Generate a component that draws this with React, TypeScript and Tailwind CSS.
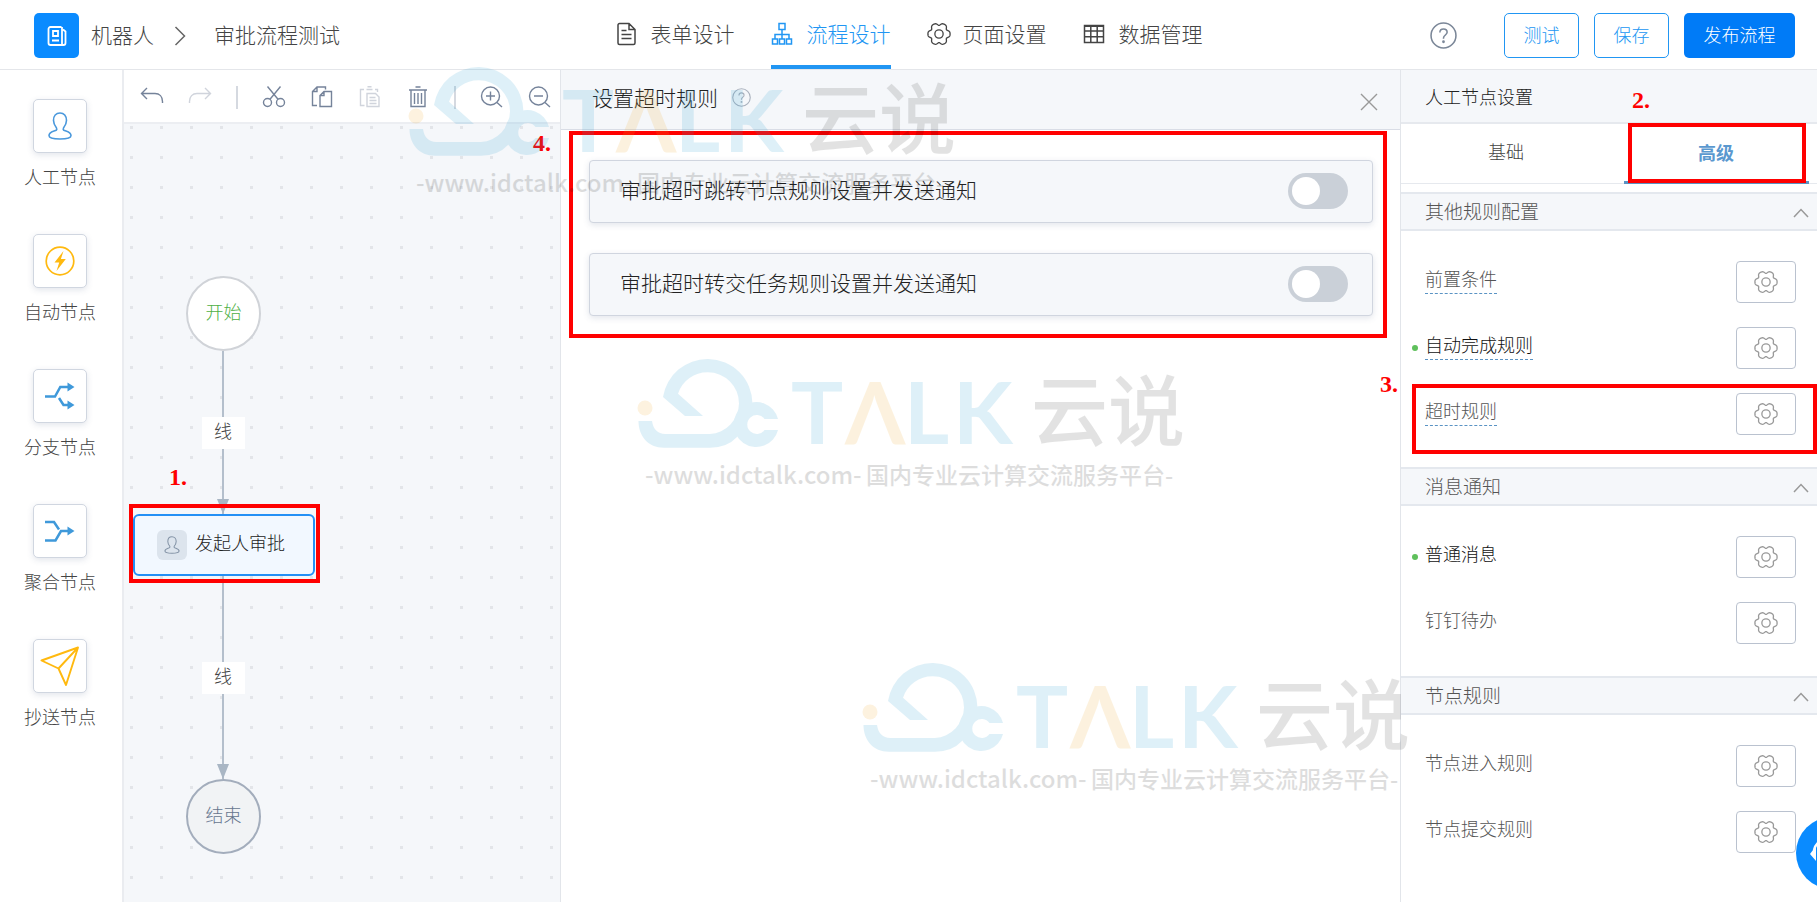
import React from "react";

const GEAR_POINTS = Array.from({ length: 96 }, (_, i) => {
  const a = (i / 96) * Math.PI * 2;
  const r = 9.3 + 1.15 * Math.cos(6 * a) - 0.3 * Math.cos(12 * a);
  return `${(11 + r * Math.cos(a)).toFixed(2)},${(11 + r * Math.sin(a)).toFixed(2)}`;
}).join(" ");

function Gear({ className }: { className?: string }) {
  return (
    <svg viewBox="0 0 22 22" className={className} fill="none" stroke="currentColor" aria-hidden="true">
      <polygon points={GEAR_POINTS} strokeWidth="1.2" strokeLinejoin="round" />
      <circle cx="11" cy="11" r="3.800" strokeWidth="1.2" />
    </svg>
  );
}

function Person({ className }: { className?: string }) {
  return (
    <svg viewBox="0 0 24 28" className={className} fill="none" stroke="currentColor" strokeWidth="1.6" aria-hidden="true">
      <path d="M12 1C8 1 5.5 4 5.5 8.5c0 3.5 1.5 5.500 3 7.500 1 2-.5 2.500-2.500 3-3 1-5 2-5 4.500C1 26 6 27 12 27s11-1 11-3.500c0-2.500-2-3.500-5-4.500-2-.5-3.500-1-2.500-3 1.500-2 3-4 3-7.500C18.500 4 16 1 12 1z" />
    </svg>
  );
}

function QuestionCircle({ className }: { className?: string }) {
  return (
    <svg viewBox="0 0 26 26" className={className} fill="none" stroke="currentColor" strokeWidth="1.5" aria-hidden="true">
      <circle cx="13" cy="13" r="12" />
      <path d="M9.500 10.200c0-2.200 1.500-3.500 3.500-3.500s3.500 1.300 3.500 3.200c0 2.400-3.500 2.900-3.500 5.600v.7" />
      <circle cx="13" cy="19" r="0.600" fill="currentColor" />
    </svg>
  );
}

const NAV = [
  {
    label: "表单设计",
    active: false,
    icon: (
      <svg viewBox="0 0 22 24" className="h-6 w-[22px]" fill="none" stroke="currentColor" strokeWidth="1.5">
        <path d="M14 1.500H4.500a1.500 1.500 0 0 0-1.500 1.500v18a1.500 1.500 0 0 0 1.500 1.500h14a1.500 1.500 0 0 0 1.500-1.500V7.500zM14 1.500v6h6M6.500 8.500h5M6.500 12.500h10M6.500 16.500h10" />
      </svg>
    ),
  },
  {
    label: "流程设计",
    active: true,
    icon: (
      <svg viewBox="0 0 22 24" className="h-6 w-[22px]" fill="none" stroke="currentColor" strokeWidth="1.500">
        <path d="M8 1.500h6v6H8zM1.500 17h5v5h-5zM8.500 17h5v5h-5zM15.500 17h5v5h-5zM11 7.500V17M4 17v-4.500h14V17" />
      </svg>
    ),
  },
  { label: "页面设置", active: false, icon: <Gear className="size-6" /> },
  {
    label: "数据管理",
    active: false,
    icon: (
      <svg viewBox="0 0 22 24" className="h-6 w-[22px]" fill="none" stroke="currentColor" strokeWidth="1.500">
        <path d="M1.500 3.500h19v17h-19zM1.500 9h19M1.500 14.700h19M7.800 3.500v17M14.200 3.500v17" />
        <path d="M1.500 4h19" strokeWidth="2" />
      </svg>
    ),
  },
];

const PALETTE = [
  { label: "人工节点", icon: <Person className="h-[28px] w-6 text-[#4a98dc]" /> },
  {
    label: "自动节点",
    icon: (
      <svg viewBox="0 0 30 30" className="size-[30px]" aria-hidden="true">
        <circle cx="15" cy="15" r="13.800" fill="none" stroke="#ffb90f" strokeWidth="1.700" />
        <path d="M18.500 5L9.500 16.500h4.700L11.500 25l9.300-12h-4.900z" fill="#ffb90f" />
      </svg>
    ),
  },
  {
    label: "分支节点",
    icon: (
      <svg viewBox="0 0 30 28" className="h-7 w-[30px]" fill="none" stroke="#3f99da" strokeWidth="2.500" aria-hidden="true">
        <path d="M0 14.500h10L15.300 5H24M14 16l4.500 7H24" />
        <path d="M22.500.5l7 4.500-7 4.500zM22.500 18.500l7 4.500-7 4.500z" fill="#3f99da" stroke="none" />
      </svg>
    ),
  },
  {
    label: "聚合节点",
    icon: (
      <svg viewBox="0 0 30 28" className="h-7 w-[30px]" fill="none" stroke="#3f99da" strokeWidth="2.500" aria-hidden="true">
        <path d="M0 5h9l5 7.500M0 23.500h10.500L16 14h8" />
        <path d="M22.500 9.500l7 4.500-7 4.500z" fill="#3f99da" stroke="none" />
      </svg>
    ),
  },
  {
    label: "抄送节点",
    icon: (
      <svg viewBox="0 0 40 40" className="size-10" fill="none" stroke="#ffb90f" strokeWidth="1.900" strokeLinejoin="round" aria-hidden="true">
        <path d="M1.500 14.500L38 1.500 26 39l-7.500-16.500zM18.500 22.500L38 1.500" />
      </svg>
    ),
  },
];

const TOOLS: { label: string; muted?: boolean; icon: React.ReactNode }[][] = [
  [
    {
      label: "撤销",
      icon: <path d="M7 3L1.500 8.500 7 14M1.500 8.500H15c4.500 0 7.500 3 7.500 8V18" />,
    },
    {
      label: "重做",
      muted: true,
      icon: <path d="M17 3l5.500 5.500L17 14M22.500 8.500H9c-4.500 0-7.500 3-7.500 8V18" />,
    },
  ],
  [
    {
      label: "剪切",
      icon: (
        <>
          <circle cx="5.500" cy="17.500" r="4" />
          <circle cx="18.500" cy="17.500" r="4" />
          <path d="M5.500 1.500L16 14.300M18.500 1.500L8 14.300" />
        </>
      ),
    },
    {
      label: "复制",
      icon: (
        <path d="M15.500 4.500v-2.500H7L2.500 6.500v14H7M7 2v4.500H2.500M14 6.500h7.500v15h-11.500V10.500zM14 6.500v4h-4" />
      ),
    },
    {
      label: "粘贴",
      muted: true,
      icon: <path d="M6 4.500H2.500v16h4M17 4.500h2.500V7M8.500 4.500h6M9.500 1.800h4M9 8.500h8.500l3.500 3.500v9.500H9zM11.500 12.500h6M11.500 15.500h7M11.500 18.500h7" />,
    },
    {
      label: "删除",
      icon: <path d="M3 5h18M9.500 2h5M5 5v16.500h14V5M8.500 8v11M12 8v11M15.500 8v11" />,
    },
  ],
  [
    {
      label: "放大",
      icon: (
        <>
          <circle cx="10.500" cy="11" r="9" />
          <path d="M17 17.500l5 4.500M6 11h9M10.500 6.500v9" />
        </>
      ),
    },
    {
      label: "缩小",
      icon: (
        <>
          <circle cx="10.500" cy="11" r="9" />
          <path d="M17 17.500l5 4.500M6 11h9" />
        </>
      ),
    },
  ],
];

const SWITCHES = [
  { id: "jump", label: "审批超时跳转节点规则设置并发送通知" },
  { id: "transfer", label: "审批超时转交任务规则设置并发送通知" },
];

type Rule = { label: string; on?: boolean; hint?: boolean };
const SECTIONS: { title: string; rules: Rule[] }[] = [
  {
    title: "其他规则配置",
    rules: [
      { label: "前置条件", hint: true },
      { label: "自动完成规则", on: true, hint: true },
      { label: "超时规则", hint: true },
    ],
  },
  { title: "消息通知", rules: [{ label: "普通消息", on: true }, { label: "钉钉待办" }] },
  { title: "节点规则", rules: [{ label: "节点进入规则" }, { label: "节点提交规则" }] },
];

const mark = "absolute z-20 font-['Liberation_Serif',serif] text-[24px] leading-6 font-bold text-[#f00]";
const frame = "pointer-events-none absolute z-20 border-4 border-[#f00]";

function Watermark({ className }: { className: string }) {
  return (
    <svg viewBox="0 0 580 160" className={`pointer-events-none absolute z-30 h-[160px] w-[580px] ${className}`} aria-hidden="true">
      <g opacity="0.15" fill="#299fd2">
        <path d="M43 57A45 45 0 0 1 88 19A45 45 0 0 1 132.500 64L117 97Q107 107.700 90 107.700H44C28 107.700 18.500 96 18.500 81H32C33 89 38 94 45 94H90A31 31 0 0 0 119 63.500A31 31 0 0 0 88 32.300A31 31 0 0 0 58 53.700L83 76H65Z" />
        <path d="M158 79A22.500 22.500 0 1 0 158 90H144.500A9.500 9.500 0 1 1 144.500 79Z" />
        <text y="104" className="font-['Lato',sans-serif] text-[87px] font-bold">
          <tspan x="171">T</tspan>
          <tspan x="284">L</tspan>
          <tspan x="333">K</tspan>
        </text>
      </g>
      <g opacity="0.14" fill="#f0a51e">
        <circle cx="25" cy="68" r="7.500" />
        <text x="225" y="104" className="font-['Lato',sans-serif] text-[87px] font-bold">Λ</text>
      </g>
      <text x="411" y="100" opacity="0.11" className="font-['Noto_Sans_CJK_SC',sans-serif] text-[77px] font-medium">云说</text>
      <g opacity="0.13" className="font-['Noto_Sans_CJK_SC',sans-serif] font-medium">
        <text x="25" y="144" className="text-[24px]">-www.idctalk.com-</text>
        <text x="246" y="144" className="text-[23px]">国内专业云计算交流服务平台-</text>
      </g>
    </svg>
  );
}

function Edge({ className, height }: { className: string; height: number }) {
  return (
    <div className={`absolute left-[69px] flex w-[60px] flex-col items-center ${className}`} style={{ height }}>
      <div className="w-[2px] flex-1 bg-[#b4bfcc]" />
      <div className="flex h-8 w-[43px] items-center justify-center bg-white pb-1 text-[18px] text-[#444]">线</div>
      <div className="w-[2px] flex-1 bg-[#b4bfcc]" />
      <svg viewBox="0 0 12 15" className="absolute bottom-0 h-[15px] w-3" aria-hidden="true">
        <path d="M0 0h12L6 15z" fill="#a9b6c4" />
      </svg>
    </div>
  );
}

export default function App() {
  return (
    <div className="relative flex h-screen min-w-[1500px] flex-col overflow-hidden bg-white font-['Noto_Sans_CJK_SC',sans-serif] text-[18px] font-light text-[#444]">
      <header className="grid h-[70px] shrink-0 grid-cols-[1fr_auto_1fr] border-b border-[#e4e6ea]">
        <div className="flex items-center pt-[2px] pl-[34px] text-[21px]">
          <span className="flex size-[45px] items-center justify-center rounded-[5px] bg-[#0a8bff]">
            <svg viewBox="0 0 20 20" className="size-5" fill="none" stroke="#fff" strokeWidth="1.800" aria-hidden="true">
              <path d="M14.500 1H3.500A2 2 0 0 0 1.500 3v14a2 2 0 0 0 2 2h13a2 2 0 0 0 2-2V5.500L16 3.500M15 1v18" />
              <path d="M6 5h5v5H6zM5 14.500h7" />
            </svg>
          </span>
          <a href="#app" className="ml-3 pb-[2px]">机器人</a>
          <svg viewBox="0 0 12 20" className="mx-5 h-5 w-3" fill="none" stroke="#666" strokeWidth="1.500" aria-hidden="true">
            <path d="M1.500 1l9 9-9 9" />
          </svg>
          <span className="ml-2 pb-[2px]">审批流程测试</span>
        </div>
        <nav className="flex gap-9 text-[21px]">
          {NAV.map((n) => (
            <a
              key={n.label}
              href="#tab"
              className={`flex w-[120px] items-center justify-between border-b-4 pt-[2px] whitespace-nowrap ${n.active ? "border-[#2196f3] text-[#2196f3]" : "border-transparent"}`}
            >
              {n.icon}
              {n.label}
            </a>
          ))}
        </nav>
        <div className="flex items-center justify-end gap-[15px] pt-[2px] pr-[22px]">
          <button type="button" aria-label="帮助" className="mr-8 text-[#7b8798]">
            <QuestionCircle className="size-[27px]" />
          </button>
          <button type="button" className="h-[45px] w-[75px] rounded-[5px] border border-[#2196f3] pb-[2px] text-[#2196f3]">测试</button>
          <button type="button" className="h-[45px] w-[75px] rounded-[5px] border border-[#2196f3] pb-[2px] text-[#2196f3]">保存</button>
          <button type="button" className="h-[45px] w-[111px] rounded-[5px] bg-[#007bf7] pb-[2px] text-white">发布流程</button>
        </div>
      </header>

      <div className="flex min-h-0 flex-1">
        <aside className="flex w-[124px] shrink-0 flex-col items-center gap-[42px] border-r-2 border-[#eaecf0] pt-[29px] pr-[2px]">
          {PALETTE.map((p) => (
            <button key={p.label} type="button" className="flex h-[93px] flex-col items-center justify-between">
              <span className="flex size-[54px] items-center justify-center rounded-[5px] border border-[#d0d6e0] bg-white shadow-[0_2px_6px_rgba(60,80,120,0.15)]">
                {p.icon}
              </span>
              <span className="leading-8">{p.label}</span>
            </button>
          ))}
        </aside>

        <main className="relative flex w-[436px] shrink-0 flex-col">
          <div className="flex h-[54px] items-center gap-6 border-b-2 border-[#eceef2] pt-[2px] pl-4 text-[#75839a]">
            {TOOLS.map((group, i) => (
              <React.Fragment key={i}>
                {i > 0 && <span className="h-[23px] w-[2px] shrink-0 bg-[#d5d9e0]" />}
                {group.map((t) => (
                  <button key={t.label} type="button" aria-label={t.label} className={t.muted ? "text-[#d0d4dc]" : ""}>
                    <svg viewBox="0 0 24 24" className="size-6" fill="none" stroke="currentColor" strokeWidth="1.400" aria-hidden="true">
                      {t.icon}
                    </svg>
                  </button>
                ))}
              </React.Fragment>
            ))}
          </div>
          <div className="relative flex-1 overflow-hidden bg-[#f5f7fa]">
            <svg className="absolute inset-0 size-full" aria-hidden="true">
              <defs>
                <pattern id="dots" width="30" height="30" patternUnits="userSpaceOnUse" x="-8" y="-12">
                  <rect x="14" y="14" width="3" height="3" fill="#e3e5e9" />
                </pattern>
              </defs>
              <rect width="100%" height="100%" fill="url(#dots)" />
            </svg>
            <Edge className="top-[227px]" height={163} />
            <Edge className="top-[452px]" height={203} />
            <div className="absolute top-[152px] left-[62px] flex size-[75px] items-center justify-center rounded-full border-2 border-[#d0d3d8] bg-white pb-1 text-[#4fb045]">
              开始
            </div>
            <div className="absolute top-[655px] left-[62px] flex size-[75px] items-center justify-center rounded-full border-2 border-[#a3adbc] bg-[#f1f3f5] pb-1 text-[#66768f]">
              结束
            </div>
            <div className="absolute top-[390px] left-[9px] flex h-[62px] w-[182px] items-center rounded-[6px] border-2 border-[#2490f5] bg-[#f2f8ff] pl-[22px] text-[#222]">
              <span className="mr-2 flex size-[30px] items-center justify-center rounded-[6px] bg-[#dce4ed]">
                <Person className="h-[18px] w-4 text-[#8292a5]" />
              </span>
              <span className="pb-[6px]">发起人审批</span>
            </div>
            <span className={`${mark} top-[341px] left-[45px]`}>1.</span>
            <div className={`${frame} top-[380px] left-[5px] h-[79px] w-[191px]`} />
          </div>
        </main>

        <section className="relative flex min-w-0 flex-1 flex-col border-x border-[#e2e5ea] bg-white">
          <div className="flex h-[60px] items-center border-b border-[#d9dde6] bg-[#f5f7fa] pr-[22px] pl-[31px]">
            <h2 className="pb-1 text-[21px] text-[#222]">设置超时规则</h2>
            <button type="button" aria-label="说明" className="ml-[14px] pb-1 text-[#a9b1bd]">
              <QuestionCircle className="size-[19px]" />
            </button>
            <button type="button" aria-label="关闭" className="ml-auto pt-1 text-[#999]">
              <svg viewBox="0 0 18 18" className="size-[18px]" fill="none" stroke="currentColor" strokeWidth="1.400">
                <path d="M1 1l16 16M17 1L1 17" />
              </svg>
            </button>
          </div>
          <div className="flex flex-col gap-[30px] py-[30px] pr-[27px] pl-7">
            {SWITCHES.map((s) => (
              <div
                key={s.id}
                className="flex h-[63px] items-center justify-between rounded-[4px] border border-[#d0d5df] bg-[#f5f7fa] pr-6 pb-px pl-[30px] shadow-[0_2px_6px_rgba(60,80,120,0.15)]"
              >
                <label htmlFor={s.id} className="pb-[3px] text-[21px] text-[#222]">{s.label}</label>
                <input
                  id={s.id}
                  type="checkbox"
                  role="switch"
                  className="h-9 w-[60px] appearance-none rounded-full bg-[#cad0d8] p-1 before:block before:size-7 before:rounded-full before:bg-white checked:bg-[#2196f3] checked:before:ml-6"
                />
              </div>
            ))}
          </div>
          <div className={`${frame} top-[61px] right-[13px] left-2 h-[207px]`} />
          <span className={`${mark} top-[61px] -left-7`}>4.</span>
          <span className={`${mark} top-[302px] right-[2px]`}>3.</span>
        </section>

        <aside className="relative flex w-[416px] shrink-0 flex-col overflow-hidden bg-white">
          <h2 className="flex h-[54px] shrink-0 items-center border-b-2 border-[#e6e9ee] bg-[#f5f7fa] pt-px pl-6 text-[#222]">人工节点设置</h2>
          <div role="tablist" className="flex h-[60px] shrink-0 border-b border-[#e6e9ee]">
            <button type="button" role="tab" aria-selected="false" className="w-[210px] shrink-0 pb-1">基础</button>
            <button type="button" role="tab" aria-selected="true" className="flex w-[210px] shrink-0 justify-center font-bold text-[#5a98cf]">
              <span className="flex h-[60px] w-[185px] items-center justify-center border-b-[3px] border-[#5a93c4] pb-px">高级</span>
            </button>
          </div>
          <div className="pt-2">
            {SECTIONS.map((s) => (
              <section key={s.title}>
                <button type="button" className="flex h-[39px] w-full items-center justify-between border-y-2 border-[#e4e8ee] bg-[#f5f7fa] pr-2 pb-px pl-6 text-[19px] text-[#555]">
                  {s.title}
                  <svg viewBox="0 0 16 10" className="mt-1 h-[10px] w-4" fill="none" stroke="#999" strokeWidth="1.500" aria-hidden="true">
                    <path d="M1 9l7-7.500L15 9" />
                  </svg>
                </button>
                <ul className="flex flex-col gap-6 pt-[30px] pr-[21px] pb-8 pl-6">
                  {s.rules.map((r) => (
                    <li key={r.label} className="relative flex h-[42px] items-center justify-between">
                      {r.on && <span className="absolute -left-[13px] size-[6px] rounded-full bg-[#5fc05c]" />}
                      <span
                        className={`mb-[6px] border-b pb-px leading-[28px] ${r.hint ? "border-dashed border-[#5a93c4]" : "border-transparent"} ${r.on ? "text-[#111]" : "text-[#555]"}`}
                      >
                        {r.label}
                      </span>
                      <button
                        type="button"
                        aria-label={`设置${r.label}`}
                        className="flex h-[42px] w-[60px] items-center justify-center rounded-[4px] border border-[#bac2cf] text-[#999]"
                      >
                        <Gear className="size-6" />
                      </button>
                    </li>
                  ))}
                </ul>
              </section>
            ))}
          </div>
          <span className={`${mark} top-[18px] left-[231px]`}>2.</span>
          <div className={`${frame} top-[53px] left-[227px] h-[60px] w-[178px]`} />
          <div className={`${frame} top-[314px] right-0 left-[11px] h-[70px]`} />
          <button type="button" aria-label="客服" className="absolute top-[747px] -right-[51px] z-20 size-[72px] rounded-full bg-[#0a8bff]">
            <svg viewBox="0 0 72 72" className="size-[72px]" fill="none" stroke="#fff" strokeWidth="2.500" aria-hidden="true">
              <path d="M18 33C22 16 50 16 54 33" />
              <path d="M20 29l-6 8 6 7zM52 29l6 8-6 7z" fill="#fff" stroke="none" />
            </svg>
          </button>
        </aside>
      </div>

      <Watermark className="top-[48px] left-[391px]" />
      <Watermark className="top-[340px] left-[620px]" />
      <Watermark className="top-[644px] left-[845px]" />
    </div>
  );
}
